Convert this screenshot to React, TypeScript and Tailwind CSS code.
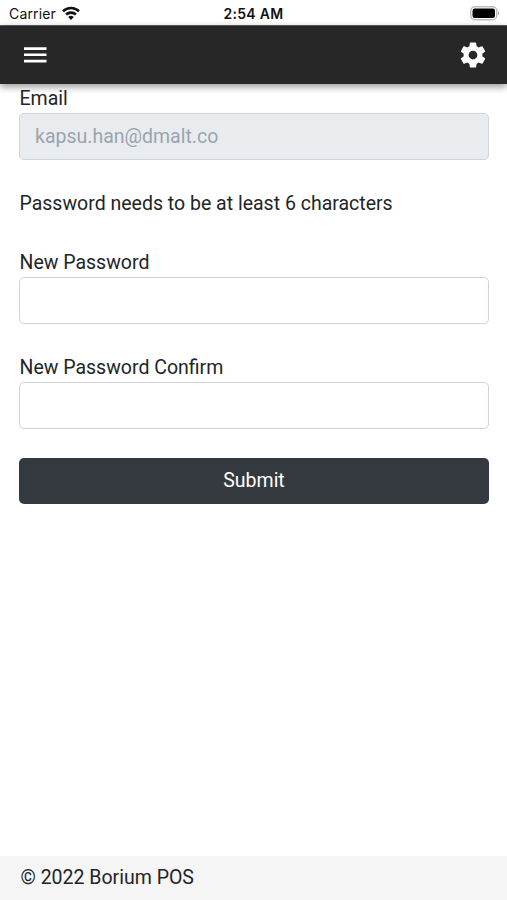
import type { ReactNode } from 'react';

const inputStyle = 'block w-full h-[47px] rounded-[5px] border border-[#ced4da] px-[15px] text-[19.5px] outline-none';

function Field({ label, children }: { label: string; children: ReactNode }) {
  return (
    <label className="block">
      <span className="block h-[29px] pl-[0.5px] leading-[29px]">{label}</span>
      {children}
    </label>
  );
}

function MenuIcon() {
  return (
    <svg width="30" height="30" viewBox="0 0 30 30" fill="currentColor">
      <path d="M4 7.2h22.5v2.7H4zM4 13.4h22.5v2.7H4zM4 19.7h22.5v2.7H4z" />
    </svg>
  );
}

function CogIcon() {
  return (
    <svg width="30" height="30" viewBox="0 0 24 24" fill="currentColor">
      <path d="M12 15.5A3.5 3.5 0 0 1 8.5 12 3.5 3.5 0 0 1 12 8.5a3.5 3.5 0 0 1 3.5 3.5 3.5 3.5 0 0 1-3.5 3.5m7.43-2.53c.04-.32.07-.64.07-.97s-.03-.66-.07-1l2.11-1.63c.19-.15.24-.42.12-.64l-2-3.46c-.12-.22-.39-.31-.61-.22l-2.49 1c-.52-.39-1.06-.73-1.69-.98l-.37-2.65A.506.506 0 0 0 14 2h-4c-.25 0-.46.18-.5.42l-.37 2.65c-.63.25-1.17.59-1.69.98l-2.49-1c-.22-.09-.49 0-.61.22l-2 3.46c-.13.22-.07.49.12.64L4.57 11c-.04.34-.07.67-.07 1s.03.65.07.97l-2.11 1.66c-.19.15-.25.42-.12.64l2 3.46c.12.22.39.3.61.22l2.49-1.01c.52.4 1.06.74 1.69.99l.37 2.65c.04.24.25.42.5.42h4c.25 0 .46-.18.5-.42l.37-2.65c.63-.26 1.17-.59 1.69-.99l2.49 1.01c.22.08.49 0 .61-.22l2-3.46c.12-.22.07-.49-.12-.64z" />
    </svg>
  );
}

function StatusBar() {
  return (
    <div className="grid h-[25px] shrink-0 grid-cols-3 items-center pt-[2px] pr-[7px] pl-[9px] font-['Inter',sans-serif] text-[14px] text-[#111]">
      <div className="flex items-center gap-1.5">
        <span className="tracking-[0.15px]">Carrier</span>
        <svg className="-mt-0.5" width="18" height="14" viewBox="0 0 18 14" fill="none" stroke="currentColor" strokeWidth="2.6">
          <path d="M1 5.2a11.6 11.6 0 0 1 16 0" />
          <path d="M4.1 8.5a7.2 7.2 0 0 1 9.8 0" />
          <path d="M9 14 6.2 11a4.2 4.2 0 0 1 5.6 0Z" fill="currentColor" stroke="none" />
        </svg>
      </div>
      <span className="pr-[2px] text-center font-semibold tracking-[0.3px] whitespace-nowrap">2:54 AM</span>
      <svg className="-mt-px justify-self-end" width="30" height="15" viewBox="0 0 30 15">
        <rect x="0.75" y="0.75" width="26" height="13" rx="4" fill="none" stroke="#bdbdbd" strokeWidth="1.5" />
        <rect x="2.5" y="2.5" width="22.5" height="9.5" rx="2.2" fill="#000" />
        <path d="M28 5c1.8.8 1.8 3.7 0 4.5z" fill="#b0b0b0" />
      </svg>
    </div>
  );
}

export default function App() {
  return (
    <div className="flex h-[900px] w-full flex-col bg-white font-['Roboto',sans-serif] text-[19.5px] text-[#212529]">
      <StatusBar />
      <header className="flex h-[59px] shrink-0 items-center justify-between border-t border-[#555] bg-[#272727] pr-[19px] pl-[20px] text-white shadow-[0_3px_7px_rgba(0,0,0,0.4)]">
        <button aria-label="Menu"><MenuIcon /></button>
        <button aria-label="Settings"><CogIcon /></button>
      </header>

      <main className="flex-1 pr-[18px] pl-[19px]">
        <Field label="Email">
          <input className={`${inputStyle} bg-[#e9ecef] text-[#9aa4ae]`} defaultValue="kapsu.han@dmalt.co" disabled />
        </Field>
        <p className="mt-[29px] h-[29px] pl-[0.5px] leading-[29px]">Password needs to be at least 6 characters</p>
        <div className="mt-[30px] space-y-[29px]">
          <Field label="New Password">
            <input type="password" className={`${inputStyle} bg-white text-[#495057]`} />
          </Field>
          <Field label="New Password Confirm">
            <input type="password" className={`${inputStyle} bg-white text-[#495057]`} />
          </Field>
          <button className="block h-[46px] w-full rounded-[5px] bg-[#343a40] text-white">Submit</button>
        </div>
      </main>

      <footer className="flex h-[44px] items-center bg-[#f5f5f5] px-[20.5px]">© 2022 Borium POS</footer>
    </div>
  );
}
